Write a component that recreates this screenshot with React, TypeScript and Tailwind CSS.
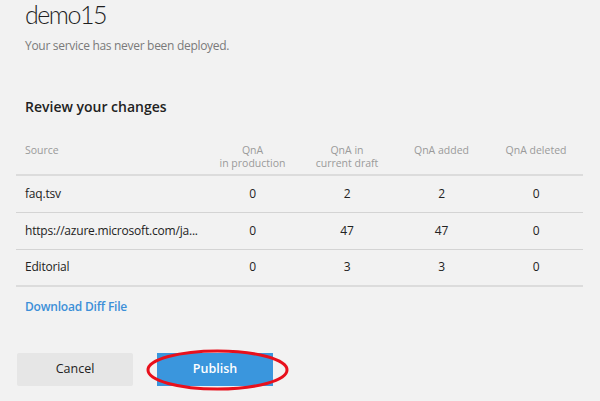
import React from "react";

const rows = [
  { source: "faq.tsv", prod: 0, draft: 2, added: 2, deleted: 0 },
  { source: "https://azure.microsoft.com/ja...", prod: 0, draft: 47, added: 47, deleted: 0 },
  { source: "Editorial", prod: 0, draft: 3, added: 3, deleted: 0 },
];

const App: React.FC = () => {
  return (
    <div
      className="h-[401px] w-[600px] overflow-hidden bg-[#f2f2f2] text-[#222]"
      style={{ fontFamily: '"Open Sans", "Noto Sans", sans-serif' }}
    >
      <div className="px-[25px]">
        <h1
          className="text-[25px] font-light leading-[28px] tracking-[-1.5px] text-[#1f1f1f]"
          style={{ fontFamily: "Lato, sans-serif" }}
        >
          demo15
        </h1>
        <p className="mt-[9px] text-[12px] leading-[18px] tracking-[-0.3px] text-[#7a7a7a]">
          Your service has never been deployed.
        </p>
        <h2 className="mt-[42px] text-[14px] font-semibold leading-[20px] text-[#222]">
          Review your changes
        </h2>
      </div>

      <table className="ml-[16px] mt-[27px] w-[567px] table-fixed border-collapse">
        <thead>
          <tr className="border-b-2 border-[#dcdcdc] text-[10.5px] font-normal text-[#9a9a9a]">
            <th className="w-[189px] pb-[4px] pl-[9px] text-left align-top font-normal leading-[13px]">
              Source
            </th>
            <th className="w-[95px] pb-[4px] align-top font-normal leading-[13px]">
              QnA
              <br />
              in production
            </th>
            <th className="w-[94px] pb-[4px] align-top font-normal leading-[13px]">
              QnA in
              <br />
              current draft
            </th>
            <th className="w-[95px] pb-[4px] align-top font-normal leading-[13px]">QnA added</th>
            <th className="w-[94px] pb-[4px] align-top font-normal leading-[13px]">QnA deleted</th>
          </tr>
        </thead>
        <tbody className="text-[12px] tracking-[-0.2px]">
          {rows.map((r, i) => (
            <tr
              key={r.source}
              className={i === rows.length - 1 ? "border-b-2 border-[#dcdcdc]" : "border-b border-[#d4d4d4]"}
            >
              <td className="h-[37px] pl-[9px] text-left">{r.source}</td>
              <td className="text-center">{r.prod}</td>
              <td className="text-center">{r.draft}</td>
              <td className="text-center">{r.added}</td>
              <td className="text-center">{r.deleted}</td>
            </tr>
          ))}
        </tbody>
      </table>

      <div className="px-[25px] pt-[6px]">
        <a href="#" className="text-[12px] font-semibold leading-[18px] tracking-[-0.2px] text-[#3c8fd8]">
          Download Diff File
        </a>
      </div>

      <div className="mt-[36px] flex gap-[24px] pl-[17px]">
        <button className="h-[33px] w-[116px] rounded-[2px] bg-[#e6e6e6] text-[12.5px] text-[#222]">
          Cancel
        </button>
        <div className="relative">
          <button className="h-[33px] w-[116px] bg-[#3a96dd] text-[12.5px] font-semibold text-white">
            Publish
          </button>
          <svg
            className="pointer-events-none absolute left-[-11px] top-[-4px]"
            width="143"
            height="42"
            viewBox="0 0 143 42"
          >
            <ellipse cx="71.5" cy="21" rx="69.5" ry="19" fill="none" stroke="#e8101c" strokeWidth="3" />
          </svg>
        </div>
      </div>
    </div>
  );
};

export default App;
